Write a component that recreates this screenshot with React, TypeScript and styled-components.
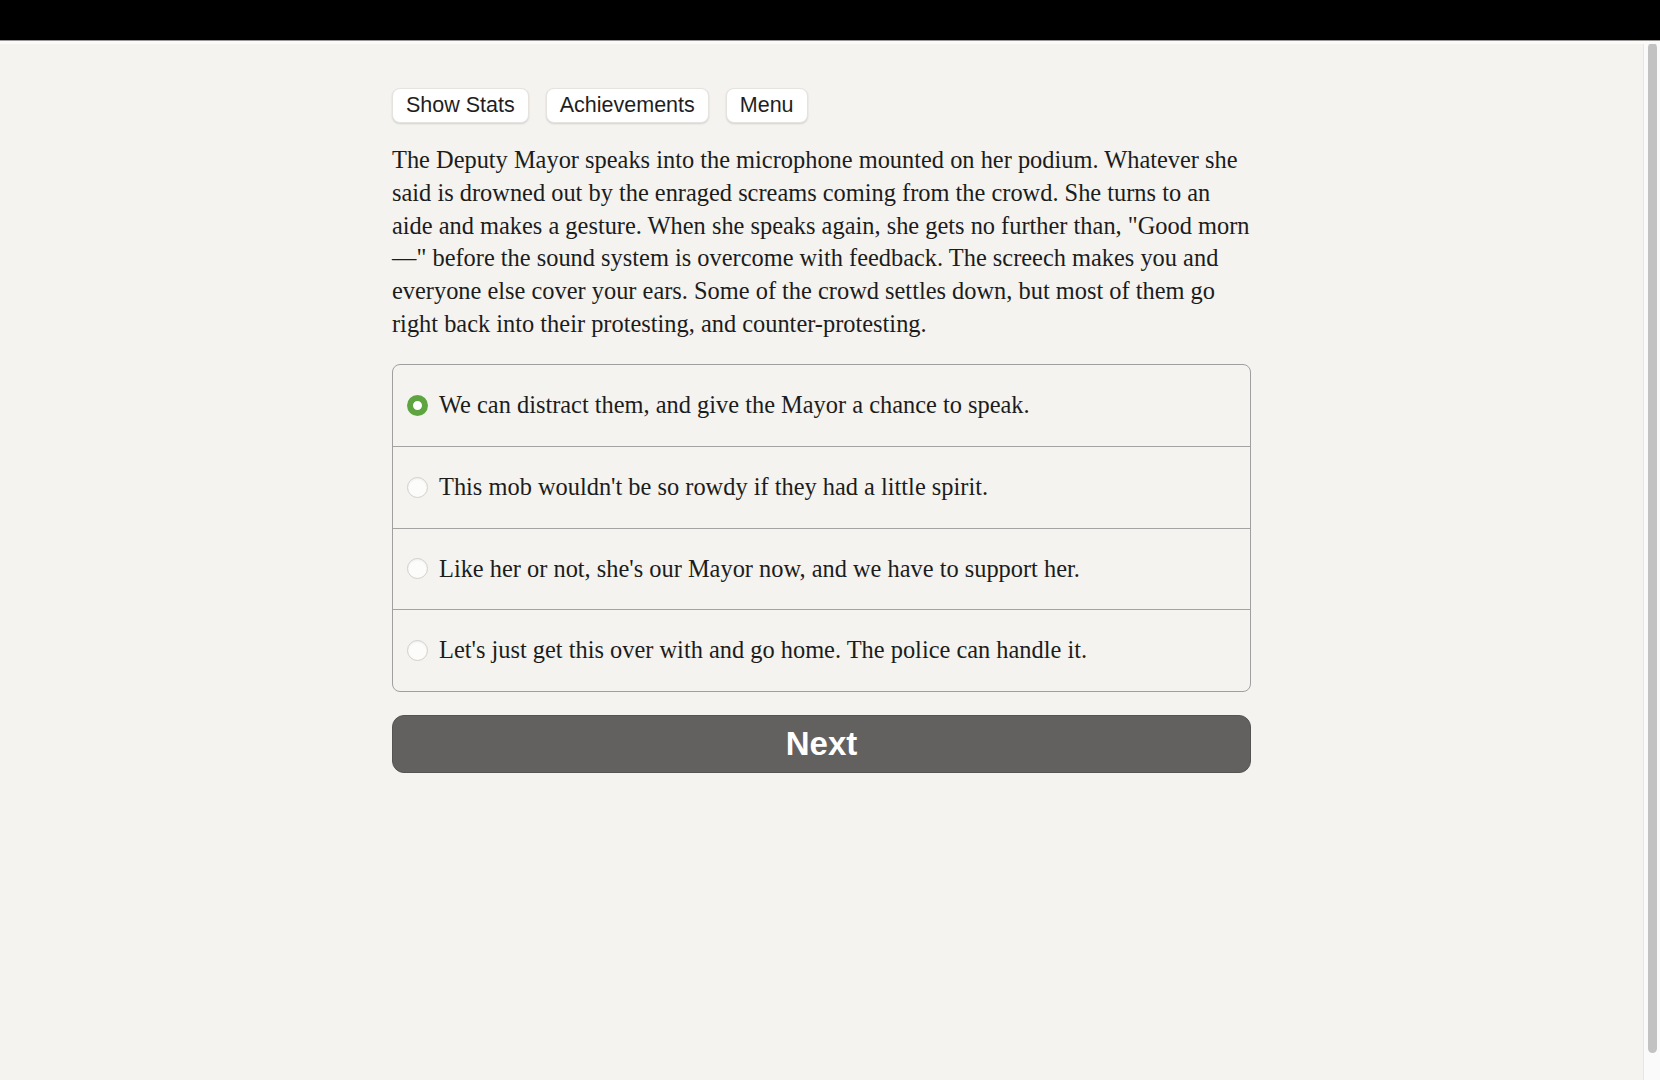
import React, { useState } from "react";
import styled, { createGlobalStyle } from "styled-components";

const GlobalStyle = createGlobalStyle`
  html, body {
    margin: 0;
    padding: 0;
    height: 100%;
    overflow: hidden;
    background: #f4f3ef;
  }
  #root {
    height: 100%;
  }
  * {
    box-sizing: border-box;
  }
`;

const Shell = styled.div`
  height: 100vh;
  display: grid;
  grid-template-rows: 40px 1fr;
  background: #f4f3ef;
`;

const TopBar = styled.header`
  background: #000;
  box-shadow: 0 1px 0 #9a9896, 0 4px 0 #fbfaf8;
  position: relative;
  z-index: 1;
`;

const Viewport = styled.div`
  display: grid;
  grid-template-columns: 1fr 17px;
  min-height: 0;
`;

const Main = styled.main`
  padding-top: 48px;
  display: flex;
  justify-content: center;
`;

const Column = styled.div`
  width: 859px;
  display: flex;
  flex-direction: column;
`;

const Toolbar = styled.nav`
  display: flex;
  gap: 17px;
`;

const ToolButton = styled.button`
  height: 35px;
  padding: 0 13px;
  border: 1px solid #e6e3de;
  border-radius: 8px;
  background: #fff;
  box-shadow: 0 1px 2px rgba(0, 0, 0, 0.14);
  font-family: "Liberation Sans", Arial, sans-serif;
  font-size: 21.5px;
  color: #1e1e1e;
  cursor: pointer;
`;

const Story = styled.p`
  margin: 21px 0 0;
  font-family: "Liberation Serif", "Times New Roman", serif;
  font-size: 24.4px;
  line-height: 32.8px;
  color: #1c1c1c;
`;

const Choices = styled.fieldset`
  margin: 23px 0 0;
  padding: 0;
  border: 1px solid #9f9f9f;
  border-radius: 8px;
  overflow: hidden;
`;

const Choice = styled.label`
  height: 81.5px;
  display: flex;
  align-items: center;
  gap: 11px;
  padding: 0 14px 1px;
  border-top: 1px solid #a3a3a3;
  font-family: "Liberation Serif", "Times New Roman", serif;
  font-size: 24.4px;
  color: #1c1c1c;
  cursor: pointer;

  &:first-child {
    border-top: none;
  }
`;

const Radio = styled.span<{ $on: boolean }>`
  flex: none;
  width: 21px;
  height: 21px;
  border-radius: 50%;
  background: ${(p) => (p.$on ? "#fff" : "#fcfcfb")};
  border: ${(p) => (p.$on ? "6.5px solid #5ea541" : "1px solid #d2d0cc")};
  box-shadow: ${(p) => (p.$on ? "none" : "inset 0 1px 2px rgba(0,0,0,0.06)")};
`;

const NextButton = styled.button`
  margin-top: 23px;
  height: 58px;
  padding-top: 2px;
  border: 1px solid #555453;
  border-radius: 12px;
  background: #626160;
  color: #fff;
  font-family: "Liberation Sans", Arial, sans-serif;
  font-weight: 700;
  font-size: 33px;
  cursor: pointer;
`;

const Track = styled.div`
  background: #fafafa;
  border-left: 1px solid #e6e6e6;
  padding: 3px 3px 27px 4px;
  display: flex;
`;

const Thumb = styled.div`
  flex: 1;
  border-radius: 5px;
  background: #c2c2c2;
`;

const options = [
  "We can distract them, and give the Mayor a chance to speak.",
  "This mob wouldn't be so rowdy if they had a little spirit.",
  "Like her or not, she's our Mayor now, and we have to support her.",
  "Let's just get this over with and go home. The police can handle it.",
];

export default function App() {
  const [picked, setPicked] = useState(0);
  return (
    <>
      <GlobalStyle />
      <Shell>
        <TopBar />
        <Viewport>
          <Main>
            <Column>
              <Toolbar>
                <ToolButton>Show Stats</ToolButton>
                <ToolButton>Achievements</ToolButton>
                <ToolButton>Menu</ToolButton>
              </Toolbar>
              <Story>
                The Deputy Mayor speaks into the microphone mounted on her podium. Whatever she
                said is drowned out by the enraged screams coming from the crowd. She turns to an
                aide and makes a gesture. When she speaks again, she gets no further than, "Good
                morn—" before the sound system is overcome with feedback. The screech makes you and
                everyone else cover your ears. Some of the crowd settles down, but most of them go
                right back into their protesting, and counter-protesting.
              </Story>
              <Choices>
                {options.map((text, i) => (
                  <Choice key={i} onClick={() => setPicked(i)}>
                    <Radio $on={picked === i} />
                    {text}
                  </Choice>
                ))}
              </Choices>
              <NextButton>Next</NextButton>
            </Column>
          </Main>
          <Track>
            <Thumb />
          </Track>
        </Viewport>
      </Shell>
    </>
  );
}
